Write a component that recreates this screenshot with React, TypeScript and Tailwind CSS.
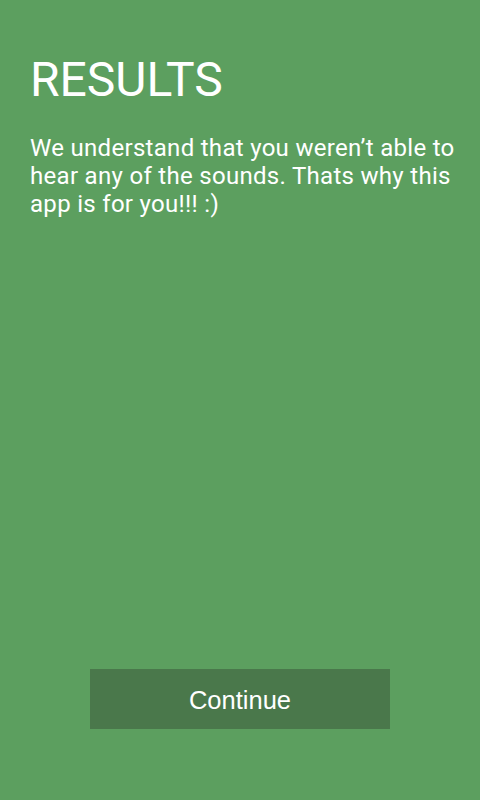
export default function App() {
    return (
        <div className="flex h-[800px] w-[480px] flex-col bg-[#5c9f5f] text-white">
            <div className="pt-[56px] pr-[16px] pl-[30px]">
                <h1 className="font-['Roboto',sans-serif] text-[48px] leading-[48px] font-normal">RESULTS</h1>
                <p className="mt-[30px] font-['Roboto',sans-serif] text-[24px] leading-[28px] tracking-[0.3px]">
                    We understand that you weren’t able to hear any of the sounds. Thats why this app is for you!!! :)
                </p>
            </div>
            <div className="mt-auto flex justify-center pb-[71px]">
                <button className="h-[60px] w-[300px] bg-[#4a784b] pt-[2px] font-['Liberation_Sans',Arial,sans-serif] text-[25.5px] text-white">
                    Continue
                </button>
            </div>
        </div>
    );
}
